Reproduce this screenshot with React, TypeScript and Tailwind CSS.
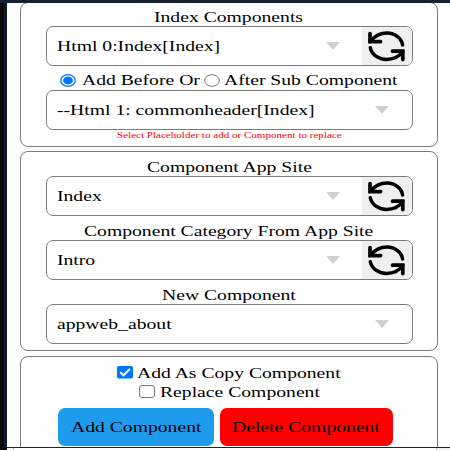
import type { ReactNode } from "react";

function Label({ children, className = "" }: { children: ReactNode; className?: string }) {
  return (
    <span className={`block w-0 origin-left scale-x-[1.31] whitespace-nowrap text-[15px] leading-[18px] ${className}`}>
      {children}
    </span>
  );
}

function RefreshIcon() {
  return (
    <svg viewBox="0 0 49 39" className="h-[39px] w-[49px] shrink-0" fill="none" stroke="#000" strokeLinecap="round" strokeLinejoin="round" strokeWidth="3.5">
      <path d="M8 14.500C12.500 9 18 5.900 25 5.900C33 5.900 39.800 11.500 40.600 18M8.300 20.800C9.800 27.500 16.500 32.400 24.500 32.400C31.500 32.400 37.500 29.200 40.800 24.500" />
      <path strokeWidth="3.7" strokeLinejoin="miter" d="M8 6.500V14.600H18.600M30.500 24.200H40.800V32.600" />
    </svg>
  );
}

function Field({ value, refresh = false }: { value: string; refresh?: boolean }) {
  return (
    <div className="mb-px ml-[25px] flex h-[40px] w-[367px] shrink-0 items-center overflow-hidden rounded-[7px] border border-[#7c7c7c] bg-white pl-[10px]">
      <Label>{value}</Label>
      <div className={`ml-auto h-0 w-0 border-x-[7.500px] border-t-[8px] border-x-transparent border-t-[#d0d0d0] ${refresh ? "mr-[22px]" : "mr-[23px]"}`} />
      {refresh && (
        <button className="flex h-full w-[50px] items-center justify-start bg-[#efefef]">
          <RefreshIcon />
        </button>
      )}
    </div>
  );
}

function Radio({ checked = false }: { checked?: boolean }) {
  return (
    <svg width="16" height="13" viewBox="0 0 16 13" className="shrink-0" fill="none">
      <ellipse cx="8" cy="6.500" rx="7.300" ry="5.800" fill="#fff" stroke={checked ? "#0075ff" : "#767676"} strokeWidth={checked ? 1.3 : 1} />
      {checked && <ellipse cx="8" cy="6.500" rx="4.900" ry="3.900" fill="#0075ff" />}
    </svg>
  );
}

export default function App() {
  return (
    <div className="flex h-[450px] w-[450px] flex-col overflow-hidden bg-white font-['Liberation_Serif',serif] text-black">
      <div className="h-[3px] shrink-0 bg-[#132131]" />
      <div className="flex h-[444px] shrink-0 overflow-hidden">
        <div className="w-[7px] shrink-0 border-r-[3px] border-[#0f1a27] bg-[#090909]" />
        <main className="flex w-[443px] shrink-0 flex-col pl-[13px]">
          <section className="-mt-px flex h-[145px] w-[418px] shrink-0 flex-col rounded-[8px] border border-[#7c7c7c]">
            <div className="h-[23px] shrink-0 pl-[133px] pt-[5px]"><Label>Index Components</Label></div>
            <Field value="Html 0:Index[Index]" refresh />
            <div className="flex h-[23px] shrink-0 items-center pl-[39px] pt-[3px]">
              <Radio checked />
              <div className="w-[128px] pl-[6px]"><Label>Add Before Or</Label></div>
              <Radio />
              <div className="pl-[4px]"><Label>After Sub Component</Label></div>
            </div>
            <Field value="--Html 1: commonheader[Index]" />
            <div className="-mt-px pl-[96px]">
              <span className="block w-0 origin-left scale-x-[1.230] whitespace-nowrap text-[9px] leading-[10px] text-[#ff0000]">
                Select Placeholder to add or Component to replace
              </span>
            </div>
          </section>
          <section className="mt-[4px] flex h-[200px] w-[418px] shrink-0 flex-col rounded-[8px] border border-[#7c7c7c]">
            <div className="h-[24px] shrink-0 pl-[126px] pt-[6px]"><Label>Component App Site</Label></div>
            <Field value="Index" refresh />
            <div className="h-[23px] shrink-0 pl-[63px] pt-[5px]"><Label>Component Category From App Site</Label></div>
            <Field value="Intro" refresh />
            <div className="h-[23px] shrink-0 pl-[141px] pt-[5px]"><Label>New Component</Label></div>
            <Field value="appweb_about" />
          </section>
          <section className="mt-[5px] flex h-[110px] w-[418px] shrink-0 flex-col rounded-[8px] border border-[#7c7c7c]">
            <div className="flex h-[25px] shrink-0 items-center pl-[96px] pt-[7px]">
              <svg width="16" height="13" viewBox="0 0 16 13" className="-mt-[2px]" fill="none">
                <rect width="16" height="12.500" rx="1.800" fill="#0075ff" />
                <path d="M3.200 6.300L6.500 9.300L12.800 3" stroke="#fff" strokeWidth="2" />
              </svg>
              <div className="pl-[4px]"><Label>Add As Copy Component</Label></div>
            </div>
            <div className="flex h-[20px] shrink-0 items-center pl-[118px]">
              <div className="-mt-[2px] h-[13px] w-[16px] rounded-[3px] border border-[#767676]" />
              <div className="pl-[5px]"><Label>Replace Component</Label></div>
            </div>
            <div className="flex gap-[6px] pl-[37px] pt-[6px]">
              <button className="h-[38px] w-[156px] rounded-[7px] bg-[#1f9bee] pl-[13px]"><Label className="text-left">Add Component</Label></button>
              <button className="h-[38px] w-[173px] rounded-[7px] bg-[#ff0000] pl-[12px]"><Label className="text-left">Delete Component</Label></button>
            </div>
          </section>
        </main>
      </div>
      <div className="flex h-[3px] shrink-0">
        <div className="w-[7px] bg-[#090909]" />
        <div className="flex grow border-t border-[#20252b] bg-white">
          <div className="h-[2px] w-[7px] rounded-tr-[3px] border-r border-[#888]" />
          <div className="ml-auto h-[2px] w-[14px] rounded-tl-[2px] border-l border-[#aaa] bg-[#f0f0f0]" />
        </div>
      </div>
    </div>
  );
}
